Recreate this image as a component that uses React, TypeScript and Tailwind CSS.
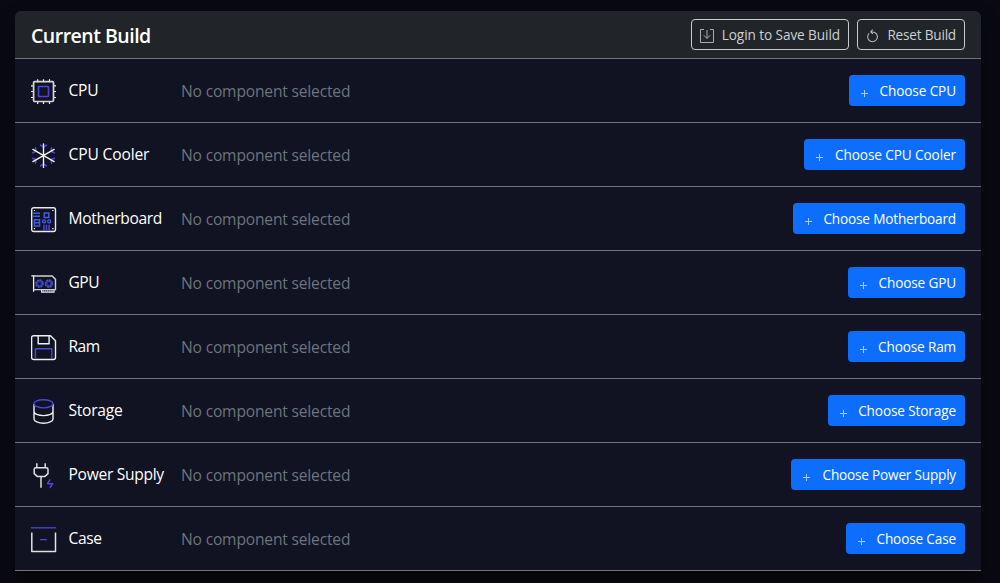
import type { ReactNode } from 'react';

const CpuIcon = () => (
  <svg className="size-[26px]" viewBox="0 0 26 26" fill="none">
    <path d="M6.7.2v3M12.5.2v3M18.5.2v3M6.7 22v3M12.5 22v3M18.5 22v3M0 6.9h3M0 12.5h3M0 18.5h3M22 6.9h3M22 12.5h3M22 18.5h3" stroke="#f4f4f4" strokeWidth="1.2" />
    <rect x="2.6" y="2.6" width="19.9" height="19.9" rx="1.2" stroke="#d6d6d6" strokeWidth="1.7" />
    <rect x="7.5" y="7.5" width="10" height="10" rx="0.6" stroke="url(#accent)" strokeWidth="1.6" />
  </svg>
);

const CoolerIcon = () => (
  <svg className="size-[26px]" viewBox="0 0 26 26" fill="none" strokeLinecap="round">
    <path d="M9.6 2.2 12.5 4.2l2.9-2M9.6 22.8l2.9-2 2.9 2M1.6 9.7l3.3-1.2-.4-3.6M23.4 9.7l-3.3-1.2.4-3.6M1.6 15.3l3.3 1.2-.4 3.6M23.4 15.3l-3.3 1.2.4 3.6" stroke="#4a48dc" strokeWidth="1.6" />
    <path d="M12.5.8v23.6M1.9 6.4l21.2 12.2M23.1 6.4 1.9 18.6" stroke="#f2f2f2" strokeWidth="1.35" />
  </svg>
);

const MotherboardIcon = () => (
  <svg className="size-[26px]" viewBox="0 0 26 26" fill="none">
    <rect x="0.7" y="0.7" width="23.8" height="23.8" rx="2" stroke="#e9e9ee" strokeWidth="1.4" />
    <path d="M2.8 3.5h1.3M21.2 3.5h1.3M2.8 21.7h1.3M21.2 21.7h1.3" stroke="#fff" strokeWidth="1.2" />
    <path d="M1.5 6.2H9M1.5 9.2H9M3.4 12.7h5.2v6.2H3.4zM3.4 15.8h5.2M13.2 5.9h4.6v4.6h-4.6z" stroke="#3f5bea" strokeWidth="1.5" />
    <circle cx="13" cy="14.4" r="1.5" stroke="#3f5bea" strokeWidth="1.4" />
    <circle cx="18.2" cy="14.4" r="1.5" stroke="#3f5bea" strokeWidth="1.4" />
    <path d="M12.9 17.8V24M15.5 17.8V24M18.1 17.8V24" stroke="#4c49d6" strokeWidth="1.5" />
  </svg>
);

const Fan = ({ x }: { x: number }) => (
  <g>
    <circle cx={x} cy="12.6" r="2.8" stroke="#34389a" strokeWidth="2.8" />
    <circle cx={x} cy="12.6" r="3.6" stroke="#4d58d8" strokeWidth="1.3" strokeDasharray="1.4 1.4" />
  </g>
);

const GpuIcon = () => (
  <svg className="size-[26px]" viewBox="0 0 26 26" fill="none">
    <path d="M.3 4.8h2.3v16" stroke="#f4f4f4" strokeWidth="1.3" />
    <path d="M2.6 5h18.6l3.3 3.4v10.2H2.6" stroke="#cfcfd4" strokeWidth="1.4" />
    <path d="M10.6 19v2.2h12.4V19" stroke="#ececec" strokeWidth="1.2" />
    <path d="M11.5 20h11" stroke="#b8b8bf" strokeWidth="1.7" strokeDasharray="1.4 0.8" />
    <Fan x={8.5} />
    <Fan x={17.9} />
  </svg>
);

const RamIcon = () => (
  <svg className="size-[26px]" viewBox="0 0 26 26" fill="none" strokeLinejoin="round">
    <path d="M2.6.7h16.9l5 5v16.8a2 2 0 0 1-2 2H2.6a2 2 0 0 1-2-2V2.7a2 2 0 0 1 2-2z" stroke="#f0f0f0" strokeWidth="1.4" />
    <path d="M7.2.8v8h10.9v-8" stroke="#f0f0f0" strokeWidth="1.4" />
    <path d="M4.4 23.8V13.8h16.4v10" stroke="url(#accent)" strokeWidth="1.4" />
  </svg>
);

const StorageIcon = () => (
  <svg className="size-[26px]" viewBox="0 0 26 26" fill="none">
    <path d="M3 4.9v15c0 2.4 4.2 4.3 9.5 4.3s9.5-1.9 9.5-4.3v-15M3 12.4c0 2.4 4.2 4.2 9.5 4.2s9.5-1.8 9.5-4.2" stroke="#efefef" strokeWidth="1.4" />
    <ellipse cx="12.5" cy="4.8" rx="9.5" ry="4.1" stroke="#4b47dc" strokeWidth="1.4" />
  </svg>
);

const PowerIcon = () => (
  <svg className="size-[26px]" viewBox="0 0 26 26" fill="none" strokeLinejoin="round">
    <path d="M5.8.2V4.8M14.2.2V4.8M10 13.8v11" stroke="#d2d2d2" strokeWidth="1.6" />
    <path d="M4.8 4.7h10.5c1 0 1.7.7 1.7 1.7v4.2l-3.3 3H6.5l-3.3-3V6.4c0-1 .6-1.7 1.6-1.7z" stroke="#e2e2e2" strokeWidth="1.5" />
    <path d="m19.2 16.3-2.7 4.4h5.2L18.9 25" stroke="#4f46dc" strokeWidth="1.5" />
  </svg>
);

const CaseIcon = () => (
  <svg className="size-[26px]" viewBox="0 0 26 26" fill="none" strokeLinejoin="round">
    <path d="M.8 5.4v19.1h23.7V5.4" stroke="#e2e2e2" strokeWidth="1.5" />
    <path d="M0 .8h25" stroke="#464bdc" strokeWidth="1.3" />
    <path d="M9.1 12.6h6.8" stroke="#464bdc" strokeWidth="1.3" />
  </svg>
);

const PlusIcon = () => (
  <svg className="mt-[5px] ml-[3px] h-[7px] w-[7px]" viewBox="0 0 7 7" stroke="#a9caff" strokeWidth="1">
    <path d="M3.5 0v7M0 3.5h7" />
  </svg>
);

const SaveIcon = () => (
  <svg className="mt-[3px] size-[14px]" viewBox="0 0 14 14" fill="none" stroke="#a9abac" strokeWidth="1">
    <path d="M4 .5H.5v13h13V.5H10M7 1v8.3M3.8 6.3 7 9.5l3.2-3.2" />
  </svg>
);

const ResetIcon = () => (
  <svg className="mt-[3px] size-[14px]" viewBox="0 0 14 14" fill="none" stroke="#b5b7b8" strokeWidth="1.05">
    <path d="M3.1 4.3A4.9 4.9 0 1 0 6.6 2.9H5M6.7.7 4.7 2.9l2.2 2" />
  </svg>
);

type Part = { name: string; icon: ReactNode; label: string; button: string };

const parts: Part[] = [
  { name: 'CPU', icon: <CpuIcon />, label: 'tracking-[-0.25px]', button: 'w-[116px] tracking-[-0.1px]' },
  { name: 'CPU Cooler', icon: <CoolerIcon />, label: 'tracking-[-0.15px]', button: 'w-[161px] tracking-[-0.1px]' },
  { name: 'Motherboard', icon: <MotherboardIcon />, label: 'tracking-[-0.33px]', button: 'w-[172px] tracking-[-0.17px]' },
  { name: 'GPU', icon: <GpuIcon />, label: 'tracking-[-0.5px]', button: 'w-[117px] tracking-[-0.15px]' },
  { name: 'Ram', icon: <RamIcon />, label: 'tracking-[-0.5px]', button: 'w-[117px] tracking-[-0.15px]' },
  { name: 'Storage', icon: <StorageIcon />, label: 'tracking-[-0.25px]', button: 'w-[137px] tracking-[-0.12px]' },
  { name: 'Power Supply', icon: <PowerIcon />, label: 'tracking-[-0.3px]', button: 'w-[174px] tracking-[-0.2px]' },
  { name: 'Case', icon: <CaseIcon />, label: 'tracking-[-0.35px]', button: 'w-[119px] tracking-[-0.15px]' },
];

const outline =
  'flex h-[31px] items-center justify-between rounded border border-[#c8cacc] px-2 text-[13.6px] whitespace-nowrap text-[#cdcfd1]';

export default function App() {
  return (
    <main className="h-[583px] overflow-hidden bg-[#090911] pt-[11px] pr-[19px] pl-[15px] font-['Open_Sans','Noto_Sans',sans-serif]">
      <svg className="absolute size-0">
        <defs>
          <linearGradient id="accent" x1="0" y1="0" x2="1" y2="1">
            <stop offset="0" stopColor="#3c52e4" />
            <stop offset="1" stopColor="#6039c6" />
          </linearGradient>
        </defs>
      </svg>
      <section className="rounded-t-md bg-[#111222] shadow-[0_8px_16px_rgba(0,0,0,0.5)]">
        <header className="flex h-12 items-center justify-between rounded-t-md border-b border-[#6c757d] bg-[#212529] px-4">
          <h1 className="pt-0.5 text-[19.5px] leading-6 font-semibold tracking-[-0.5px] text-white">Current Build</h1>
          <div className="flex gap-2">
            <button className={`${outline} w-[158px]`}>
              <SaveIcon />
              <span className="pt-px tracking-[-0.08px]">Login to Save Build</span>
            </button>
            <button className={`${outline} w-[108px]`}>
              <ResetIcon />
              <span className="pt-px tracking-[-0.2px]">Reset Build</span>
            </button>
          </div>
        </header>
        {parts.map((part) => (
          <div key={part.name} className="flex h-16 items-center border-b border-[#6c757d] px-4">
            <div className="w-[37.5px] pt-[3px]">{part.icon}</div>
            <div className={`w-[112.5px] pb-px text-[15.6px] leading-6 whitespace-nowrap text-white ${part.label}`}>{part.name}</div>
            <div className="flex-1 pt-px text-[15.6px] leading-6 tracking-[-0.18px] text-[#6c757d]">No component selected</div>
            <button
              className={`flex h-[31px] items-center justify-between rounded bg-[#0d6efd] px-[9px] text-[13.6px] whitespace-nowrap text-white ${part.button}`}
            >
              <PlusIcon />
              <span className="pt-px">Choose {part.name}</span>
            </button>
          </div>
        ))}
      </section>
    </main>
  );
}
